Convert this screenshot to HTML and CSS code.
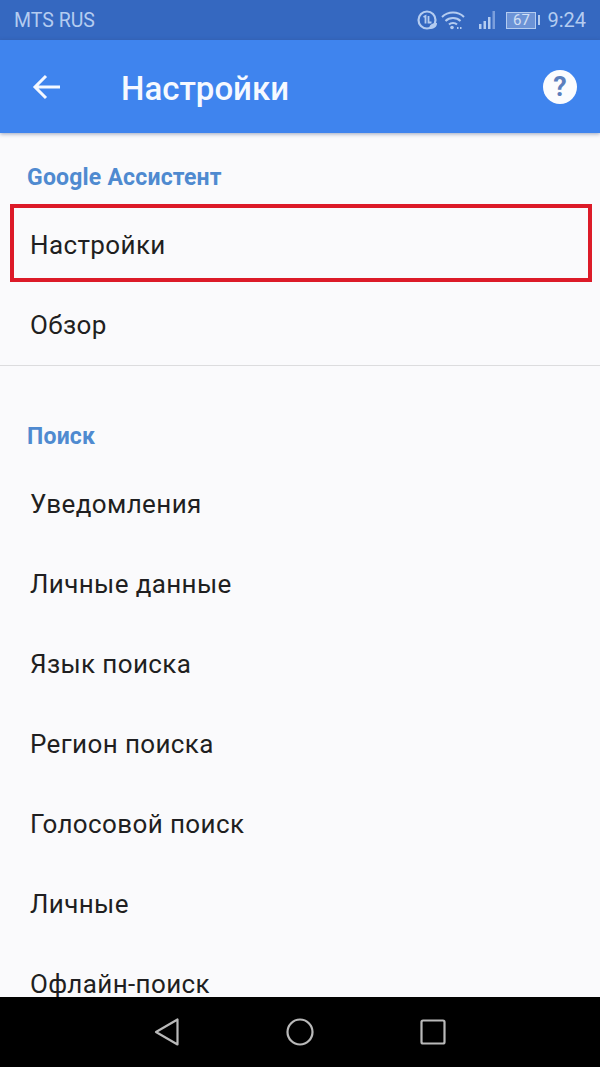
FILE: index.html
```html
<!DOCTYPE html>
<html lang="ru">
<head>
<meta charset="utf-8">
<title>Настройки</title>
<link rel="stylesheet" href="styles.css">
</head>
<body>
<div class="phone">
  <div class="status">
    <span class="carrier">MTS RUS</span>
    <div class="status-icons">
      <svg class="ic-data" width="22" height="22" viewBox="0 0 22 22"><circle cx="10" cy="11" r="8.500" fill="none" stroke="#b4ccf0" stroke-width="2.200"/><path d="M6.500 8 8.500 7v7.500M11.500 7v6.500h3" fill="none" stroke="#b4ccf0" stroke-width="1.800"/><path d="M12 20c0-4 3-6 8-6 0 4-3 6-8 6z" fill="#b4ccf0"/></svg>
      <svg class="ic-wifi" width="24" height="20" viewBox="0 0 24 20"><path d="M1 7c6-6 16-6 22 0M4.500 11c4-4 11-4 15 0M8 14.500c2-2 6-2 8 0" fill="none" stroke="#b4ccf0" stroke-width="2"/><circle cx="11" cy="17.500" r="1.800" fill="#b4ccf0"/><path d="M16 17h1.500v2H16zM19 17h1.500v2H19z" fill="#b4ccf0"/></svg>
      <svg class="ic-signal" width="18" height="20" viewBox="0 0 18 20"><path d="M1 14h2.500v5H1zM5.500 11H8v8H5.500zM10 7h2.500v12H10z" fill="#b4ccf0"/><path d="M14.500 1H17v18h-2.500z" fill="#7c9fdc"/></svg>
      <div class="battery"><span class="battery-level">67</span></div>
      <span class="battery-tip"></span>
      <span class="clock">9:24</span>
    </div>
  </div>
  <header class="appbar">
    <svg class="back" width="30" height="26" viewBox="0 0 30 26"><path d="M28 13H3M14 2 3 13l11 11" fill="none" stroke="#f4f8ff" stroke-width="3"/></svg>
    <h1 class="title">Настройки</h1>
    <div class="help">?</div>
  </header>
  <main class="content">
    <section class="group group-first">
      <h2 class="group-title">Google Ассистент</h2>
      <div class="row row-marked">Настройки</div>
      <div class="row">Обзор</div>
    </section>
    <section class="group group-next">
      <h2 class="group-title">Поиск</h2>
      <div class="row">Уведомления</div>
      <div class="row">Личные данные</div>
      <div class="row">Язык поиска</div>
      <div class="row">Регион поиска</div>
      <div class="row">Голосовой поиск</div>
      <div class="row">Личные</div>
      <div class="row">Офлайн-поиск</div>
    </section>
  </main>
  <nav class="navbar">
    <svg width="28" height="30" viewBox="0 0 28 30"><path d="M24.500 2.500v25L3 15z" fill="none" stroke="#b9b9b9" stroke-width="2.200" stroke-linejoin="round"/></svg>
    <svg width="30" height="30" viewBox="0 0 30 30"><circle cx="15" cy="15" r="12.500" fill="none" stroke="#b9b9b9" stroke-width="2.200"/></svg>
    <svg class="nav-recent" width="26" height="26" viewBox="0 0 26 26"><rect x="1.500" y="1.500" width="23" height="23" rx="1.500" fill="none" stroke="#b9b9b9" stroke-width="2.200"/></svg>
  </nav>
</div>
</body>
</html>
```
FILE: styles.css
```css
* { box-sizing: border-box; }
html, body { margin: 0; padding: 0; }
body { font-family: Roboto, "Noto Sans", sans-serif; background: #000; }
.phone { width: 600px; height: 1067px; display: flex; flex-direction: column; overflow: hidden; background: #fafafc; }
.status { height: 40px; flex: none; background: #3568c0; display: flex; align-items: center; justify-content: space-between; padding: 0 14px; color: #b4ccf0; }
.carrier { font-size: 19.5px; }
.status-icons { display: flex; align-items: center; }
.ic-wifi { margin-left: 2px; }
.ic-signal { margin-left: 13px; }
.battery { width: 30px; height: 17px; margin-left: 10px; border: 1px solid #b4ccf0; background: #6c93d6; display: flex; align-items: center; justify-content: center; }
.battery-level { font-size: 15px; color: #d3e0f5; line-height: 1; }
.battery-tip { width: 2px; height: 10px; margin-left: 2px; background: #b4ccf0; }
.clock { font-size: 20px; margin-left: 7px; }
.appbar { height: 93px; flex: none; background: #3f84ee; display: flex; align-items: center; padding: 0 23px 0 32px; box-shadow: 0 1px 4px rgba(40, 60, 110, .45); position: relative; z-index: 1; }
.back { flex: none; }
.title { margin: 4px 0 0 59px; flex: 1; font-size: 33px; font-weight: 500; color: #f6f9ff; }
.help { width: 34px; height: 34px; border-radius: 50%; background: #fbfcfe; color: #5b7fbd; font-size: 27px; font-weight: 700; line-height: 34px; text-align: center; }
.content { flex: 1; min-height: 0; overflow: hidden; display: flex; flex-direction: column; }
.group { padding: 0 8px 0 10px; }
.group-first { padding-top: 30px; padding-bottom: 3px; border-bottom: 1px solid #dcdcde; }
.group-next { padding-top: 56px; }
.group-title { margin: 0; padding-left: 17px; height: 41px; font-size: 23px; line-height: 29px; font-weight: 700; color: #4f8ad0; letter-spacing: .2px; }
.group-next .group-title { height: 28px; margin-bottom: 11px; }
.row { height: 80px; display: flex; align-items: center; padding: 6px 0 0 20px; font-size: 26px; color: #1f1f21; letter-spacing: .38px; }
.row-marked { height: 78px; padding: 3px 0 0 16px; border: 4px solid #dc1a28; }
.navbar { height: 70px; flex: none; background: #000; display: flex; align-items: center; justify-content: center; gap: 104px; padding-right: 1px; }
.nav-recent { margin-left: 1px; }
```
